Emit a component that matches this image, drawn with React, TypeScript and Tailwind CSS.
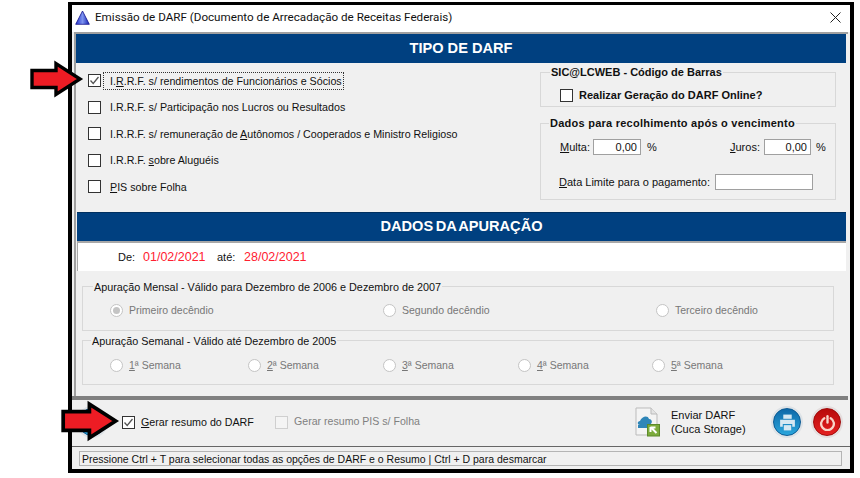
import type { ReactNode } from "react";

const font = "font-['Liberation_Sans',Arial,sans-serif]";

const Box = ({ checked, disabled }: { checked?: boolean; disabled?: boolean }) => (
  <span
    className={`w-[13px] h-[13px] shrink-0 flex items-center justify-center border ${
      disabled ? "bg-[#f4f4f4] border-[#cfcfcf]" : "bg-white border-[#333]"
    }`}
  >
    {checked && (
      <svg width="11" height="11" viewBox="0 0 11 11" fill="none">
        <path d="M1.5 5.5 L4.2 8.5 L9.5 2" stroke="#555" strokeWidth="1.3" />
      </svg>
    )}
  </span>
);

const Radio = ({ checked }: { checked?: boolean }) => (
  <span className="w-[13px] h-[13px] shrink-0 rounded-full bg-white border border-[#c4c4c4] flex items-center justify-center">
    {checked && <span className="w-[7px] h-[7px] rounded-full bg-[#c4c4c4]" />}
  </span>
);

const Bar = ({ title, className }: { title: string; className: string }) => (
  <div className={`bg-[#004080] text-white font-bold text-[14.6px] flex items-center justify-center ${className}`}>
    {title}
  </div>
);

const Arrow = ({ className, w, h }: { className: string; w: number; h: number }) => (
  <svg className={`absolute ${className}`} width={w} height={h} viewBox="0 0 54 38">
    <path d="M2 10.5 H26 V3.5 L50 19 L26 34.5 V27.5 H2 Z" fill="#ed1c24" stroke="#000" strokeWidth="3.4" />
  </svg>
);

const rows = [
  <>I.<u>R</u>.R.F. s/ rendimentos de Funcionários e Sócios</>,
  <>I.R.R.F. s/ Participação nos Lucros ou Resultados</>,
  <>I.R.R.F. s/ remuneração de <u>A</u>utônomos / Cooperados e Ministro Religioso</>,
  <>I.R.R.F. <u>s</u>obre Aluguéis</>,
  <><u>P</u>IS sobre Folha</>,
];

const Legend = ({ children, className }: { children: ReactNode; className: string }) => (
  <span className={`absolute top-[-8px] bg-[#f0f0f0] px-[1px] leading-[14px] ${className}`}>{children}</span>
);

const Input = ({ value, className }: { value?: string; className: string }) => (
  <span className={`h-[16px] bg-white border border-[#a0a0a0] text-right pr-[3px] leading-[15px] text-[11px] ${className}`}>
    {value}
  </span>
);

const PrintFace = () => (
  <span className="w-[32px] h-[32px] rounded-full bg-[#dde2e6] flex items-center justify-center shrink-0">
    <span className="w-[28px] h-[28px] rounded-full border border-[#0a5a94] bg-[linear-gradient(#0d68a8,#2aa6dc)] flex items-center justify-center">
      <svg width="19" height="19" viewBox="0 0 18 18" fill="#d6e8f2">
        <rect x="5" y="1.5" width="8" height="4" />
        <path d="M2 6.5 H16 V13 H13.5 V10.5 H4.5 V13 H2 Z" />
        <rect x="5.5" y="11.5" width="7" height="5" />
      </svg>
    </span>
  </span>
);

export default function App() {
  return (
    <div className={`relative w-[860px] h-[478px] bg-white pl-[68px] pt-[2px] overflow-hidden ${font} text-[10.7px] text-[#111]`}>
      <div className="w-[786px] h-[471px] border-4 border-t-[3px] border-black bg-[#f0f0f0] flex flex-col">
        <div className="h-[27px] shrink-0 bg-white flex items-center pl-[3px] pr-[9px] pb-[2px]">
          <svg width="15" height="15" viewBox="0 0 15 15">
            <defs>
              <linearGradient id="tri" x1="0" y1="0" x2="1" y2="0">
                <stop offset="0" stopColor="#2434d0" />
                <stop offset="0.5" stopColor="#7c92ee" />
                <stop offset="1" stopColor="#1424b4" />
              </linearGradient>
            </defs>
            <path d="M7.5 1 L14.3 14.3 H0.7 Z" fill="url(#tri)" stroke="#10108a" strokeWidth="0.8" />
          </svg>
          <span className="ml-[5px] text-[11.65px] font-['Roboto',sans-serif] text-[#111]">
            Emissão de DARF (Documento de Arrecadação de Receitas Federais)
          </span>
          <svg className="ml-auto" width="11" height="11" viewBox="0 0 11 11" fill="none">
            <path d="M0.5 0.5 L10.5 10.5 M10.5 0.5 L0.5 10.5" stroke="#222" strokeWidth="1" />
          </svg>
        </div>

        <div className="h-[364px] shrink-0 mx-[2px] border-t-2 border-l-2 border-[#a0a0a0] flex flex-col">
          <Bar title="TIPO DE DARF" className="h-[29px] shrink-0 mr-[2px]" />
          <div className="h-[149px] shrink-0 flex">
            <div className="w-[464px] pl-[12px] pt-[11px] flex flex-col gap-[13.5px]">
              {rows.map((r, i) => (
                <div key={i} className="h-[13px] flex items-center gap-[9px]">
                  <Box checked={i === 0} />
                  <span
                    className={`leading-[15px] pt-[1px] ${
                      i === 0 ? "outline-1 outline-dotted outline-[#333] -ml-[6px] pl-[6px] pr-[1px]" : ""
                    }`}
                  >
                    {r}
                  </span>
                </div>
              ))}
            </div>
            <div className="w-[296px] pt-[9px] flex flex-col gap-[16px] text-[11px]">
              <div className="relative h-[35px] border border-[#d8d8d8] pl-[19px] pt-[12px] flex items-center gap-[6px]">
                <Legend className="left-[9px] font-bold">SIC@LCWEB - Código de Barras</Legend>
                <Box />
                <span className="font-bold">Realizar Geração do DARF Online?</span>
              </div>
              <div className="relative h-[77px] border border-[#d8d8d8] pl-[18px] pt-[15px]">
                <Legend className="left-[8px] font-bold tracking-[0.25px]">Dados para recolhimento após o vencimento</Legend>
                <div className="flex items-center h-[16px] ml-[1px]">
                  <span className="w-[33px]"><u>M</u>ulta:</span>
                  <Input value="0,00" className="w-[48px]" />
                  <span className="ml-[6px] w-[83px]">%</span>
                  <span className="w-[34px]"><u>J</u>uros:</span>
                  <Input value="0,00" className="w-[47px]" />
                  <span className="ml-[5px]">%</span>
                </div>
                <div className="flex items-center h-[16px] mt-[19px]">
                  <span className="w-[156px]"><u>D</u>ata Limite para o pagamento:</span>
                  <Input className="w-[98px]" />
                </div>
              </div>
            </div>
          </div>

          <Bar title="DADOS DA APURAÇÃO" className="h-[29px] shrink-0 ml-[1px] mr-[2px] border-t border-[#003060] [word-spacing:-1.5px]" />
          <div className="h-[30px] shrink-0 bg-white border-t-2 border-l border-[#a8a8a8] ml-[1px] mr-[2px] pl-[40px] flex items-center text-[11px]">
            <span className="w-[25px]">De:</span>
            <span className="text-[12.5px] text-[#ff2030] w-[74px]">01/02/2021</span>
            <span className="w-[27px]">até:</span>
            <span className="text-[12.5px] text-[#ff2030]">28/02/2021</span>
          </div>

          <div className="px-[6px] pt-[15px] flex flex-col gap-[9px] text-[#777] text-[10.5px]">
            <div className="relative h-[45px] w-[752px] border border-[#d8d8d8] flex items-center pl-[27px] pt-[4px]">
              <Legend className="left-[10px] mt-[1px] text-[#111] text-[10.8px]">Apuração Mensal - Válido para Dezembro de 2006 e Dezembro de 2007</Legend>
              <span className="w-[273px] flex items-center gap-[6px]"><Radio checked />Primeiro decêndio</span>
              <span className="w-[273px] flex items-center gap-[6px]"><Radio />Segundo decêndio</span>
              <span className="flex items-center gap-[3px]"><Radio /><span className="ml-[3px]">Terceiro decêndio</span></span>
            </div>
            <div className="relative h-[45px] w-[752px] border border-[#d8d8d8] flex items-center pl-[27px] pt-[6px]">
              <Legend className="left-[8px] mt-[1px] text-[#111] text-[10.8px]">Apuração Semanal - Válido até Dezembro de 2005</Legend>
              {["1", "2", "3", "4", "5"].map((n, i) => (
                <span key={n} className={`flex items-center gap-[6px] ${i === 0 ? "w-[138px]" : i === 1 ? "w-[135px]" : i === 2 ? "w-[135px]" : "w-[134px]"}`}>
                  <Radio />
                  <span><u>{n}</u>ª Semana</span>
                </span>
              ))}
            </div>
          </div>
        </div>

        <div className="h-[4px] shrink-0 bg-[#808080] mr-[2px]" />
        <div className="h-[47px] shrink-0 flex items-center pl-[50px] border-b border-[#666] pb-[2px]">
          <Box checked />
          <span className="ml-[6px] w-[134px]"><u>G</u>erar resumo do DARF</span>
          <Box disabled />
          <span className="ml-[6px] w-[341px] text-[#808080] text-[10.6px]">Gerar resumo PIS s/ Folha</span>
          <svg width="26" height="30" viewBox="0 0 26 30" className="shrink-0">
            <path d="M1 1 H16 L22 7 V28 H1 Z" fill="#f4f4f4" stroke="#bbb" />
            <path d="M16 1 V7 H22" fill="#e4e4e4" stroke="#bbb" />
            <path d="M5 14 C7 9 13 8 14 12 C18 12 18 18 13 18 H5 C2 18 2 14 5 14 Z" fill="#2f86b8" />
            <rect x="3" y="18" width="11" height="3" fill="#2f86b8" />
            <rect x="12.5" y="17.5" width="12" height="11.5" fill="#7cab3c" stroke="#5d8a2a" />
            <path d="M21.5 26 L16 20.5 M15.5 20.5 H20.5 M15.5 20 V25" stroke="#fff" strokeWidth="2" fill="none" />
          </svg>
          <span className="ml-[10px] w-[100px] leading-[14px] text-[11px]">
            Enviar DARF
            <br />
            (Cuca Storage)
          </span>
          <PrintFace />
          <span className="ml-[8px] w-[32px] h-[32px] rounded-full bg-[#e4dede] flex items-center justify-center shrink-0">
            <span className="w-[28px] h-[28px] rounded-full border border-[#a00808] bg-[linear-gradient(#b80a0a,#e42020)] flex items-center justify-center">
              <svg width="17" height="17" viewBox="0 0 16 16" fill="none" stroke="#f8d4c8" strokeWidth="2.2" strokeLinecap="round">
                <path d="M5 4 A6 6 0 1 0 11 4" />
                <path d="M8 2 V8" />
              </svg>
            </span>
          </span>
        </div>
        <div className="h-[15px] shrink-0 mt-[4px] ml-[7px] mr-[8px] border border-[#b4b4b4] pl-[2px] leading-[14px] text-[10.5px]">
          Pressione Ctrl + T para selecionar todas as opções de DARF e o Resumo | Ctrl + D para desmarcar
        </div>
      </div>
      <Arrow className="left-[30px] top-[60px]" w={54} h={38} />
      <span className="absolute left-[76px] top-[406px]">
        <PrintFace />
      </span>
      <Arrow className="left-[61px] top-[400px]" w={59} h={42} />
    </div>
  );
}
